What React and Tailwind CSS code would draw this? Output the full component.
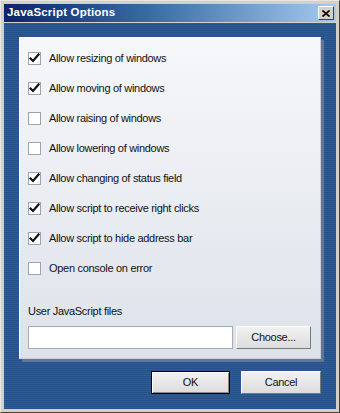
import React from "react";

const items = [
  ["Allow resizing of windows", true],
  ["Allow moving of windows", true],
  ["Allow raising of windows", false],
  ["Allow lowering of windows", false],
  ["Allow changing of status field", true],
  ["Allow script to receive right clicks", true],
  ["Allow script to hide address bar", true],
  ["Open console on error", false],
];

function Check({ checked }) {
  return (
    <div className="w-[13px] h-[13px] border border-[#9ca3ad] bg-white flex items-center justify-center shrink-0">
      {checked && (
        <svg width="11" height="11" viewBox="0 0 11 11">
          <path d="M1.5 5.5 L4 8 L9.5 1.5" stroke="#111" strokeWidth="2.2" fill="none" strokeLinecap="square" />
        </svg>
      )}
    </div>
  );
}

function Btn({ children, def, className }) {
  return (
    <div
      className={
        "h-[23px] flex items-center justify-center bg-[linear-gradient(#f2f2f2,#dcdcde)] text-[#111] " +
        (def
          ? "border border-black shadow-[inset_1px_1px_0_#fff,inset_-1px_-1px_0_#888]"
          : "border border-t-white border-l-white border-r-[#7a7a7a] border-b-[#7a7a7a] ") +
        " " +
        className
      }
    >
      {children}
    </div>
  );
}

export default function App() {
  return (
    <div
      className="w-[340px] h-[413px] bg-[#d4d0c8] border border-t-[#e8e6e2] border-l-[#e8e6e2] border-r-[#404040] border-b-[#404040] flex flex-col p-[3px] tracking-[-0.3px]"
      style={{ fontFamily: '"Liberation Sans", Arial, sans-serif', fontSize: "11px" }}
    >
      <div className="h-[18px] bg-[linear-gradient(90deg,#0a246a,#3a6ea5_45%,#a6caf0)] flex items-center justify-between pl-[3px] pr-[2px] shrink-0">
        <span className="text-white font-bold text-[11.5px] tracking-[0.2px]">
          JavaScript Options
        </span>
        <div className="w-[16px] h-[14px] bg-[#d4d0c8] border border-t-white border-l-white border-r-[#404040] border-b-[#404040] flex items-center justify-center">
          <svg width="8" height="7" viewBox="0 0 8 7">
            <path d="M0.5 0.5 L7.5 6.5 M7.5 0.5 L0.5 6.5" stroke="#000" strokeWidth="1.6" />
          </svg>
        </div>
      </div>
      <div className="h-[1px] shrink-0" />
      <div className="flex-1 bg-[repeating-linear-gradient(180deg,#2d5b94_0px,#2d5b94_1px,#27518a_1px,#27518a_2px)] flex flex-col px-[15px] pt-[14px]">
        <div className="w-[302px] h-[322px] bg-[linear-gradient(#f6f7f9,#dde2ea)] border border-t-white border-l-white border-r-[#c8ccd4] border-b-[#c8ccd4] shadow-[3px_3px_0_#5f7799] flex flex-col pl-[8px] pt-[5px]">
          {items.map(([t, c]) => (
            <div key={t} className="h-[30px] flex items-center gap-[8px] text-[#111]">
              <Check checked={c} />
              <span>{t}</span>
            </div>
          ))}
          <div className="mt-[21px] h-[14px] flex items-center text-[#111]">User JavaScript files</div>
          <div className="flex mt-[8px] gap-[3px]">
            <div className="w-[205px] h-[23px] bg-white border border-[#a8acb3]" />
            <Btn className="w-[75px]">Choose...</Btn>
          </div>
        </div>
        <div className="flex justify-end gap-[11px] mt-[12px]">
          <Btn def className="w-[79px] h-[23px]">OK</Btn>
          <Btn className="w-[80px]">Cancel</Btn>
        </div>
      </div>
    </div>
  );
}
